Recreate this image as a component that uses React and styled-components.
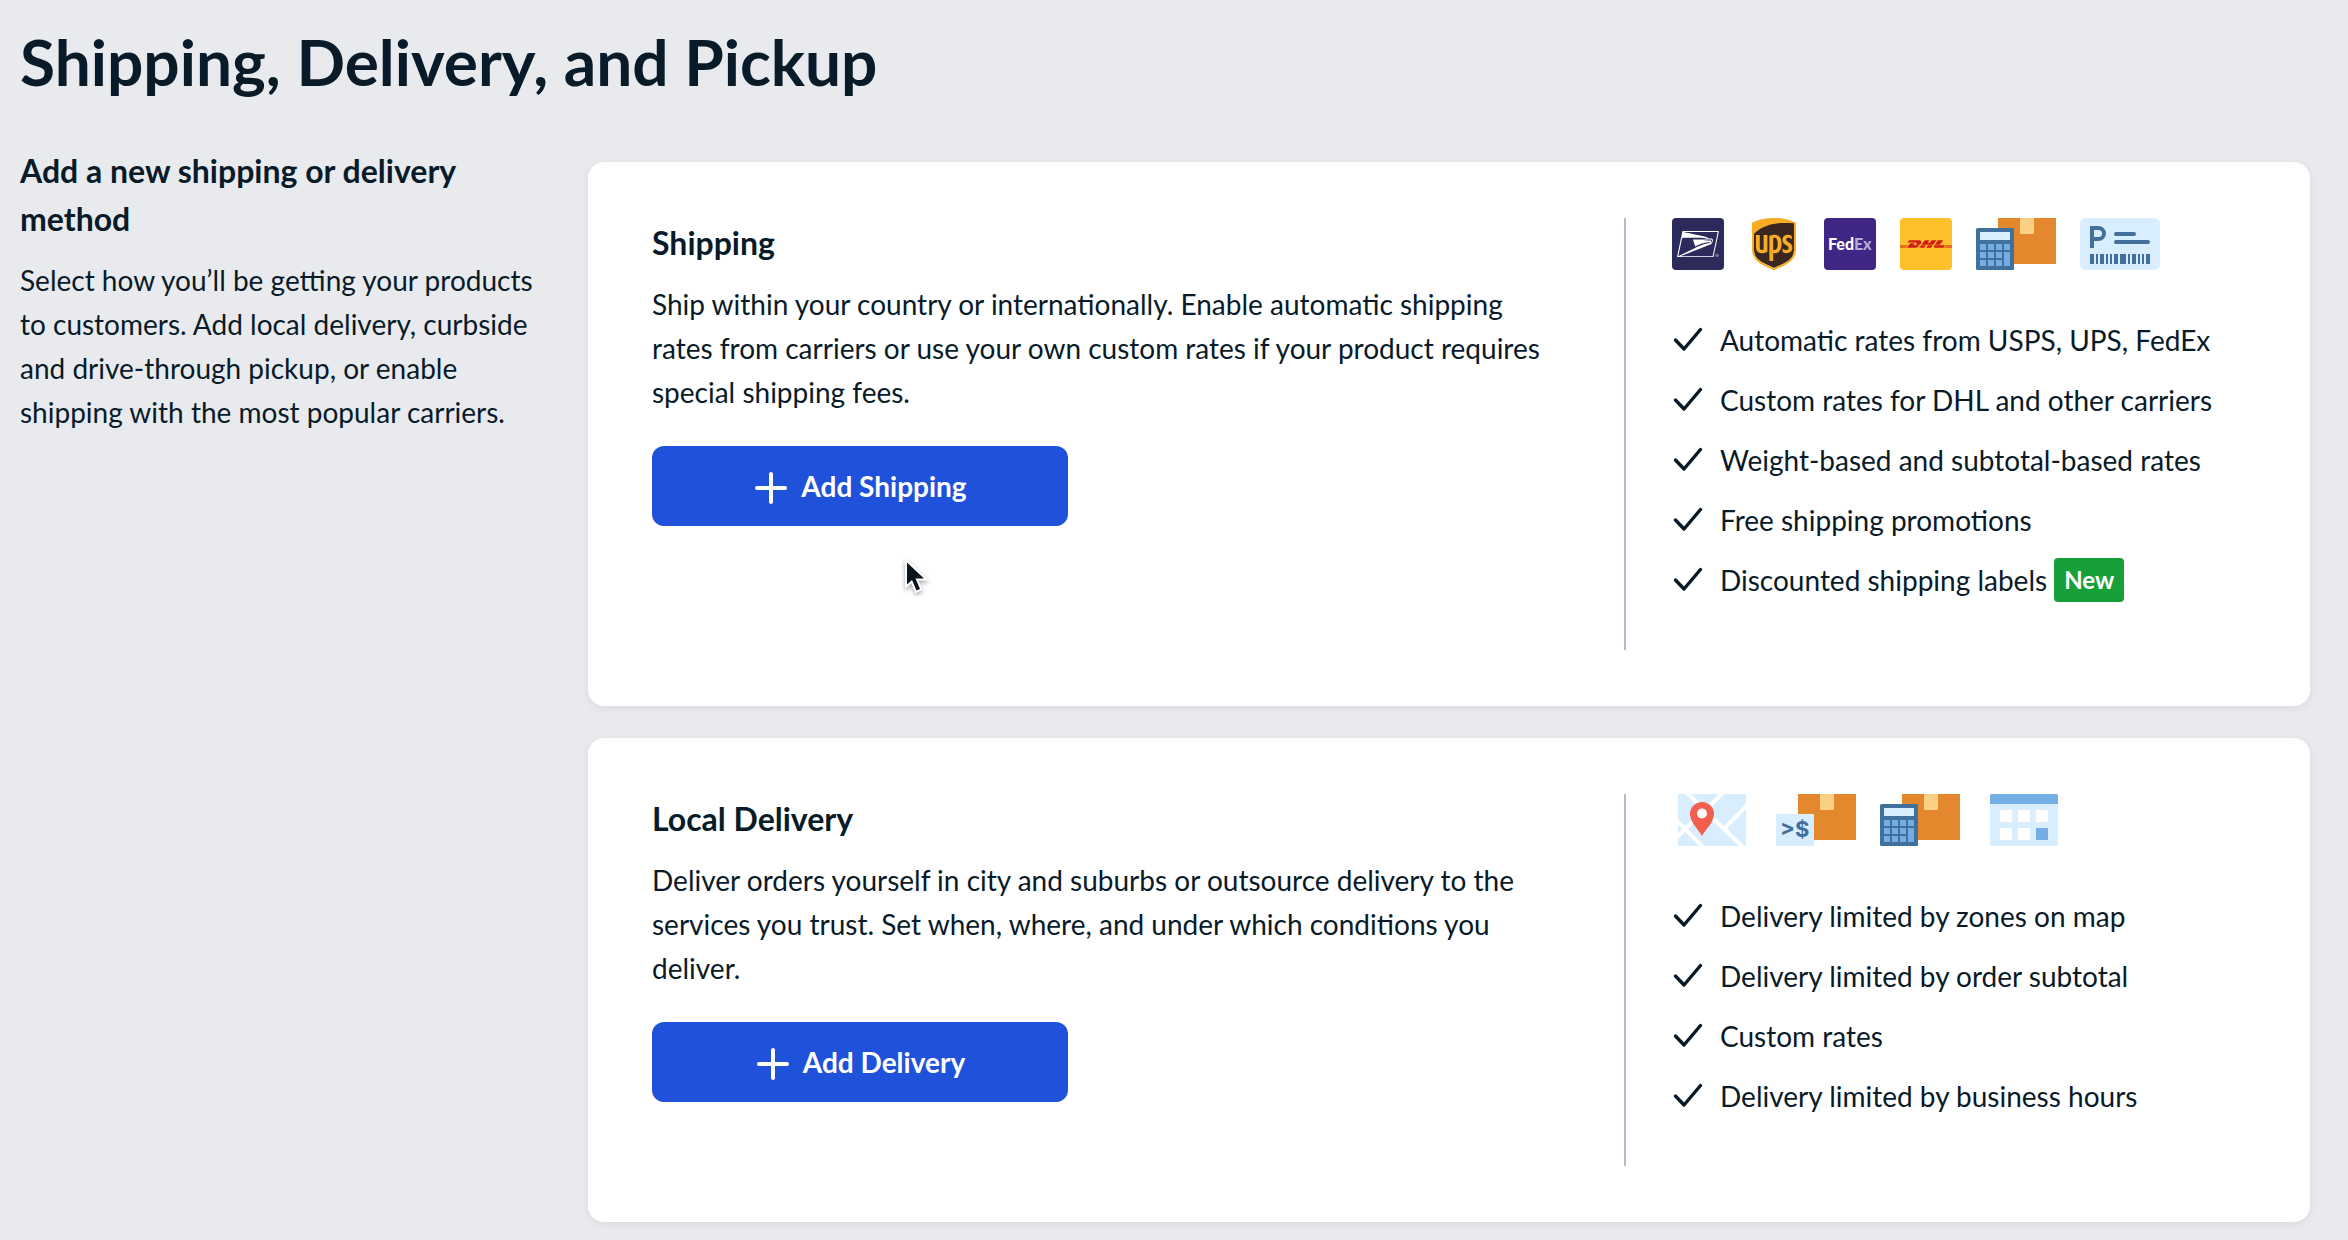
import React from 'react'
import styled, { createGlobalStyle } from 'styled-components'
import { FaUps } from 'react-icons/fa6'
import { SiDhl, SiUsps } from 'react-icons/si'

const GlobalStyle = createGlobalStyle`
  * {
    box-sizing: border-box;
  }

  body {
    margin: 0;
    background-color: #e8eaed;
    color: #091a29;
    font-family: Lato, sans-serif;
    font-size: 28px;
    line-height: 44px;
  }
`

const Page = styled.main`
  position: relative;
  padding: 22px 38px 18px 20px;
`

const PageTitle = styled.h1`
  margin: 0 0 44px;
  font-size: 64px;
  font-weight: 700;
  line-height: 80px;
`

const Layout = styled.div`
  display: flex;
  align-items: flex-start;
  gap: 48px;
`

const Intro = styled.section`
  flex: 0 0 520px;
`

const Cards = styled.div`
  flex: 1;
  min-width: 0;
  display: flex;
  flex-direction: column;
  gap: 32px;
  padding-top: 16px;
`

const Card = styled.section`
  display: flex;
  padding: 56px 64px;
  background-color: #fff;
  border-radius: 16px;
  box-shadow: 0 2px 8px rgba(9, 26, 41, 0.07);
`

const CardMain = styled.div`
  flex: 1;
  min-width: 0;
  padding-right: 76px;
`

const CardAside = styled.div`
  flex: 0 0 622px;
  padding: 0 0 32px 46px;
  border-left: 2px solid #b1bdca;
`

const Heading = styled.h2`
  margin: 0 0 15px;
  padding-top: 1px;
  font-size: 32px;
  font-weight: 700;
  line-height: 48px;
`

const Text = styled.p`
  margin: 0;
`

const AddButton = styled.button`
  display: flex;
  align-items: center;
  justify-content: center;
  gap: 14px;
  width: 416px;
  height: 80px;
  margin-top: 32px;
  padding: 0 0 0 2px;
  border: 0;
  border-radius: 12px;
  background-color: #2051db;
  color: #fff;
  font: inherit;
  font-weight: 700;
  cursor: pointer;
`

const Icons = styled.div`
  display: flex;
  gap: 24px;
  margin-bottom: 48px;

  svg {
    flex: none;
    display: block;
  }
`

const Features = styled.ul`
  list-style: none;
  margin: 0;
  padding: 0;
`

const Feature = styled.li`
  display: flex;
  align-items: center;
  margin-bottom: 16px;
  white-space: nowrap;

  svg {
    flex: none;
    margin-right: 16px;
  }
`

const Badge = styled.span`
  margin-left: 7px;
  padding: 0 10px;
  border-radius: 4px;
  background-color: #17a03a;
  color: #fff;
  font-size: 24px;
  font-weight: 700;
`

const Pointer = styled.svg`
  position: absolute;
  left: 900px;
  top: 556px;
  pointer-events: none;
  filter: drop-shadow(0 2px 2px rgba(0, 0, 0, 0.35));
`

const PlusIcon = () => (
  <svg width="32" height="36" viewBox="0 0 32 36" aria-hidden="true">
    <path
      d="M16 6v28M2 20h28"
      stroke="currentColor"
      strokeWidth="4"
      strokeLinecap="round"
    />
  </svg>
)

const CheckIcon = () => (
  <svg width="32" height="32" viewBox="0 0 32 32" aria-hidden="true">
    <path
      d="M3.5 16l8.5 9L28.5 5.5"
      fill="none"
      stroke="#091a29"
      strokeWidth="3.4"
      strokeLinecap="round"
      strokeLinejoin="round"
    />
  </svg>
)

const UspsIcon = () => (
  <svg width="52" height="52" viewBox="0 0 52 52" role="img" aria-label="USPS">
    <rect width="52" height="52" rx="4" fill="#2c2a5b" />
    <SiUsps x="5" y="5" size={42} color="#fff" />
  </svg>
)

const UpsIcon = () => (
  <svg width="52" height="52" viewBox="0 0 52 52" role="img" aria-label="UPS">
    <path
      d="M6 5C18 1 34 1 46 5v27c0 9-5.5 11.5-20 18C11.5 43.5 6 41 6 32z"
      fill="#3b2620"
    />
    <FaUps x="-4" y="-4" size={60} color="#f6ad25" />
  </svg>
)

const FedexIcon = () => (
  <svg width="52" height="52" viewBox="0 0 52 52" role="img" aria-label="FedEx">
    <rect width="52" height="52" rx="4" fill="#3f2584" />
    <text
      x="4"
      y="32"
      fontFamily="Lato, sans-serif"
      fontSize="16"
      fontWeight="900"
      fill="#fff"
    >
      Fed<tspan fill="#b3acd4">Ex</tspan>
    </text>
  </svg>
)

const DhlIcon = () => (
  <svg width="52" height="52" viewBox="0 0 52 52" role="img" aria-label="DHL">
    <rect width="52" height="52" rx="4" fill="#fdc02a" />
    <SiDhl size={52} color="#d01c14" />
  </svg>
)

const Parcel = () => (
  <>
    <path d="M22 0h58v46H22z" fill="#e4882e" />
    <path d="M44 0h14v16H44z" fill="#f9d084" />
  </>
)

const keys = [
  [4, 26],
  [12, 26],
  [20, 26],
  [28, 26],
  [4, 34],
  [12, 34],
  [20, 34],
  [4, 42],
  [12, 42],
  [20, 42],
]

const CalculatorIcon = () => (
  <svg width="80" height="52" viewBox="0 0 80 52" aria-hidden="true">
    <Parcel />
    <rect y="10" width="38" height="42" rx="1.5" fill="#41709d" />
    <path d="M4 14h30v8H4z" fill="#d8eeff" />
    {keys.map(([x, y]) => (
      <rect key={`${x}-${y}`} x={x} y={y} width="6" height="6" fill="#73ade3" />
    ))}
    <path d="M28 34h6v14h-6z" fill="#73ade3" />
  </svg>
)

const bars = [
  [10, 4],
  [16, 2],
  [20, 4],
  [26, 2],
  [30, 2],
  [34, 4],
  [40, 6],
  [48, 2],
  [52, 4],
  [58, 2],
  [62, 2],
  [66, 4],
]

const LabelIcon = () => (
  <svg width="80" height="52" viewBox="0 0 80 52" aria-hidden="true">
    <rect width="80" height="52" rx="6" fill="#d8eeff" />
    <g fill="none" stroke="#41709d" strokeWidth="4">
      <path d="M12 30V10h6.5a5.5 5.5 0 0 1 0 11H12" />
      <path d="M36 16h18M36 24h32" strokeLinecap="round" />
    </g>
    {bars.map(([x, width]) => (
      <rect key={x} x={x} y="36" width={width} height="10" fill="#41709d" />
    ))}
  </svg>
)

const MapIcon = () => (
  <svg width="80" height="52" viewBox="0 0 80 52" aria-hidden="true">
    <clipPath id="map-area">
      <rect x="6" width="68" height="52" rx="1" />
    </clipPath>
    <g clipPath="url(#map-area)">
      <path d="M6 0h68v52H6z" fill="#d8eeff" />
      <path
        d="M14-2l58 56M4 26l28 28M52-2L4 44M76 10L53 34"
        fill="none"
        stroke="#fff"
        strokeWidth="4"
      />
    </g>
    <path
      d="M30 42C26 35 18 28 18 20a12 12 0 0 1 24 0c0 8-8 15-12 22z"
      fill="#f25f4c"
    />
    <circle cx="30" cy="19.5" r="5" fill="#fff" />
  </svg>
)

const SubtotalIcon = () => (
  <svg width="80" height="52" viewBox="0 0 80 52" aria-hidden="true">
    <Parcel />
    <rect y="20" width="38" height="32" rx="1" fill="#d8eeff" />
    <text
      x="4"
      y="43"
      fontFamily="Inter, sans-serif"
      fontSize="22"
      fontWeight="700"
      fill="#41709d"
    >
      &gt;$
    </text>
  </svg>
)

const CalendarIcon = () => (
  <svg width="80" height="52" viewBox="0 0 80 52" aria-hidden="true">
    <rect x="6" width="68" height="52" rx="2" fill="#d8eeff" />
    <path d="M6 10V2a2 2 0 0 1 2-2h64a2 2 0 0 1 2 2v8z" fill="#73ade3" />
    <path
      d="M16 16h12v12H16zM34 16h12v12H34zM52 16h12v12H52zM16 34h12v12H16zM34 34h12v12H34z"
      fill="#fff"
    />
    <path d="M52 34h12v12H52z" fill="#73ade3" />
  </svg>
)

const methods = [
  {
    title: 'Shipping',
    text:
      'Ship within your country or internationally. Enable automatic shipping rates from carriers or use your own custom rates if your product requires special shipping fees.',
    action: 'Add Shipping',
    icons: [UspsIcon, UpsIcon, FedexIcon, DhlIcon, CalculatorIcon, LabelIcon],
    features: [
      { label: 'Automatic rates from USPS, UPS, FedEx' },
      { label: 'Custom rates for DHL and other carriers' },
      { label: 'Weight-based and subtotal-based rates' },
      { label: 'Free shipping promotions' },
      { label: 'Discounted shipping labels', badge: 'New' },
    ],
  },
  {
    title: 'Local Delivery',
    text:
      'Deliver orders yourself in city and suburbs or outsource delivery to the services you trust. Set when, where, and under which conditions you deliver.',
    action: 'Add Delivery',
    icons: [MapIcon, SubtotalIcon, CalculatorIcon, CalendarIcon],
    features: [
      { label: 'Delivery limited by zones on map' },
      { label: 'Delivery limited by order subtotal' },
      { label: 'Custom rates' },
      { label: 'Delivery limited by business hours' },
    ],
  },
]

const MethodCard = ({ title, text, action, icons, features }) => (
  <Card>
    <CardMain>
      <Heading>{title}</Heading>
      <Text>{text}</Text>
      <AddButton type="button">
        <PlusIcon />
        {action}
      </AddButton>
    </CardMain>
    <CardAside>
      <Icons>
        {icons.map((Icon, i) => (
          <Icon key={i} />
        ))}
      </Icons>
      <Features>
        {features.map(({ label, badge }) => (
          <Feature key={label}>
            <CheckIcon />
            {label}
            {badge && <Badge>{badge}</Badge>}
          </Feature>
        ))}
      </Features>
    </CardAside>
  </Card>
)

export default function App() {
  return (
    <>
      <GlobalStyle />
      <Page>
        <PageTitle>Shipping, Delivery, and Pickup</PageTitle>
        <Layout>
          <Intro>
            <Heading>Add a new shipping or delivery method</Heading>
            <Text>
              Select how you’ll be getting your products to customers. Add local
              delivery, curbside and drive-through pickup, or enable shipping
              with the most popular carriers.
            </Text>
          </Intro>
          <Cards>
            {methods.map(method => (
              <MethodCard key={method.title} {...method} />
            ))}
          </Cards>
        </Layout>
        <Pointer width="32" height="44" viewBox="0 0 32 44" aria-hidden="true">
          <path
            d="M7 6.5v22l5-4.5 4.5 10.5 3.5-1.5-4.5-10.5h8.5z"
            fill="#0b141c"
            stroke="#fff"
            strokeWidth="4"
            paintOrder="stroke"
          />
        </Pointer>
      </Page>
    </>
  )
}
